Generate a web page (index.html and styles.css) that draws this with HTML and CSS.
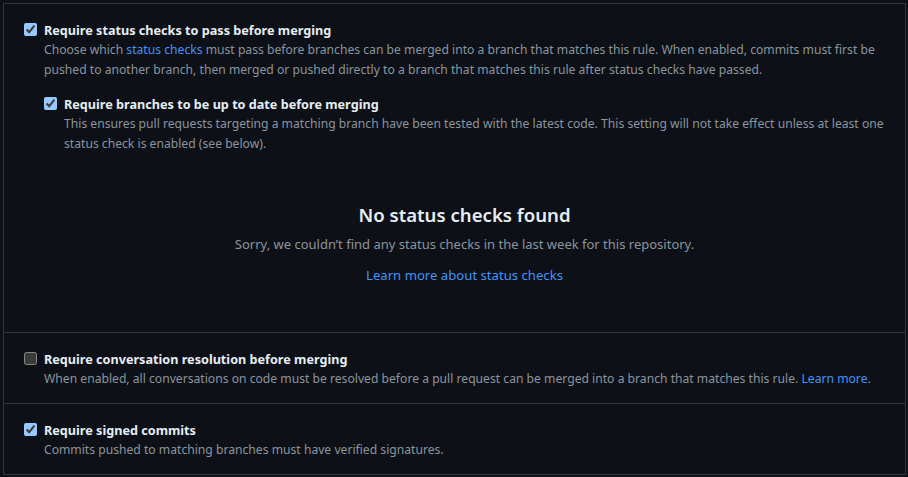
FILE: index.html
```html
<!DOCTYPE html>
<html lang="en">
<head>
<meta charset="utf-8">
<title>Branch protection</title>
<link rel="stylesheet" href="styles.css">
</head>
<body>
<div class="box">
  <section class="row">
    <label class="opt">
      <input type="checkbox" class="cb" checked>
      <span class="body">
        <span class="title">Require status checks to pass before merging</span>
        <span class="note">Choose which <a href="#" class="link">status checks</a> must pass before branches can be merged into a branch that matches this rule. When enabled, commits must first be pushed to another branch, then merged or pushed directly to a branch that matches this rule after status checks have passed.</span>
      </span>
    </label>
    <div class="nested">
      <label class="opt">
        <input type="checkbox" class="cb" checked>
        <span class="body">
          <span class="title">Require branches to be up to date before merging</span>
          <span class="note">This ensures pull requests targeting a matching branch have been tested with the latest code. This setting will not take effect unless at least one status check is enabled (see below).</span>
        </span>
      </label>
      <div class="blank">
        <h3 class="blank-title">No status checks found</h3>
        <p class="blank-text">Sorry, we couldn’t find any status checks in the last week for this repository.</p>
        <a href="#" class="link blank-link">Learn more about status checks</a>
      </div>
    </div>
  </section>
  <section class="row">
    <label class="opt">
      <input type="checkbox" class="cb">
      <span class="body">
        <span class="title">Require conversation resolution before merging</span>
        <span class="note">When enabled, all conversations on code must be resolved before a pull request can be merged into a branch that matches this rule. <a href="#" class="link">Learn more</a>.</span>
      </span>
    </label>
  </section>
  <section class="row">
    <label class="opt">
      <input type="checkbox" class="cb" checked>
      <span class="body">
        <span class="title">Require signed commits</span>
        <span class="note">Commits pushed to matching branches must have verified signatures.</span>
      </span>
    </label>
  </section>
</div>
</body>
</html>
```

FILE: styles.css
```css
html, body {
  margin: 0;
  padding: 0;
  background: #0d1117;
  color-scheme: dark;
}
body {
  padding: 3px 2px 0 3px;
  font-family: "Noto Sans", "Liberation Sans", sans-serif;
}
.box {
  border: 1px solid #30363d;
  height: 470px;
  display: flex;
  flex-direction: column;
}
.row {
  padding: 16px 20px 14px 20px;
  border-bottom: 1px solid #30363d;
}
.row:last-child {
  border-bottom: 0;
  flex: 1;
}
.opt {
  display: flex;
  align-items: flex-start;
  gap: 7px;
}
.nested {
  margin-top: 14px;
  margin-left: 20px;
}
.cb {
  width: 13px;
  height: 13px;
  margin: 3px 0 0 0;
  flex: none;
}
.body {
  display: flex;
  flex-direction: column;
}
.title {
  font-size: 12.65px;
  font-weight: 700;
  line-height: 20px;
  color: #e6edf3;
}
.note {
  font-size: 12.15px;
  line-height: 20px;
  color: #8b949e;
}
.link {
  color: #4493f8;
  text-decoration: none;
}
.blank {
  text-align: center;
  padding: 46px 0 33px 0;
}
.blank-title {
  margin: 0;
  font-size: 18.6px;
  line-height: 30px;
  font-weight: 600;
  color: #e6edf3;
}
.blank-text {
  margin: 4px 0 9px;
  font-size: 13px;
  line-height: 20px;
  color: #8b949e;
}
.blank-link {
  display: inline-block;
  font-size: 13.15px;
  line-height: 20px;
}
```
